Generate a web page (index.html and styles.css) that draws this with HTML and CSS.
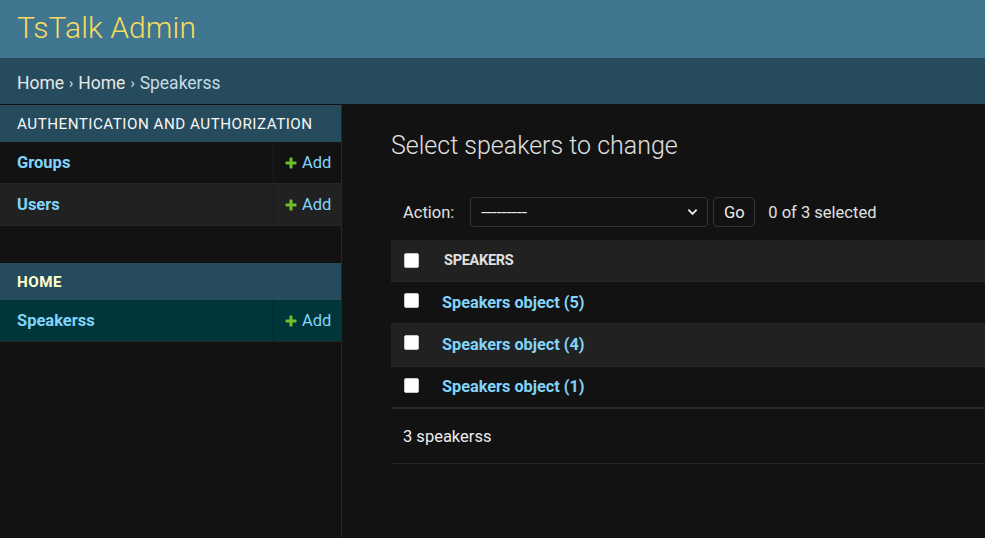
FILE: index.html
```html
<!DOCTYPE html>
<html lang="en">
<head>
<meta charset="utf-8">
<title>Select speakers to change | TsTalk Admin</title>
<link rel="stylesheet" href="styles.css">
</head>
<body>
<header class="header">
  <div class="branding">TsTalk Admin</div>
</header>
<nav class="breadcrumbs">
  <a href="#">Home</a><span class="sep">›</span><a href="#">Home</a><span class="sep">›</span><span class="current">Speakerss</span>
</nav>
<div class="main">
  <aside class="sidebar">
    <div class="module">
      <div class="caption">Authentication and Authorization</div>
      <div class="nav-row">
        <a class="model" href="#">Groups</a>
        <a class="add" href="#"><svg class="plus" viewBox="0 0 1792 1792"><path d="M1600 796v192q0 40-28 68t-68 28h-416v416q0 40-28 68t-68 28h-192q-40 0-68-28t-28-68v-416h-416q-40 0-68-28t-28-68v-192q0-40 28-68t68-28h416v-416q0-40 28-68t68-28h192q40 0 68 28t28 68v416h416q40 0 68 28t28 68z"/></svg>Add</a>
      </div>
      <div class="nav-row alt">
        <a class="model" href="#">Users</a>
        <a class="add" href="#"><svg class="plus" viewBox="0 0 1792 1792"><path d="M1600 796v192q0 40-28 68t-68 28h-416v416q0 40-28 68t-68 28h-192q-40 0-68-28t-28-68v-416h-416q-40 0-68-28t-28-68v-192q0-40 28-68t68-28h416v-416q0-40 28-68t68-28h192q40 0 68 28t28 68v416h416q40 0 68 28t28 68z"/></svg>Add</a>
      </div>
    </div>
    <div class="module">
      <div class="caption current-app">Home</div>
      <div class="nav-row selected">
        <a class="model" href="#">Speakerss</a>
        <a class="add" href="#"><svg class="plus" viewBox="0 0 1792 1792"><path d="M1600 796v192q0 40-28 68t-68 28h-416v416q0 40-28 68t-68 28h-192q-40 0-68-28t-28-68v-416h-416q-40 0-68-28t-28-68v-192q0-40 28-68t68-28h416v-416q0-40 28-68t68-28h192q40 0 68 28t28 68v416h416q40 0 68 28t28 68z"/></svg>Add</a>
      </div>
    </div>
  </aside>
  <section class="content">
    <h1 class="title">Select speakers to change</h1>
    <div class="changelist">
      <div class="actions">
        <span class="label">Action:</span>
        <div class="select">
          <span class="select-text">---------</span>
          <svg class="chevron" viewBox="0 0 12 8"><polyline points="1.5,1.5 6,6 10.5,1.5"/></svg>
        </div>
        <button class="go">Go</button>
        <span class="counter">0 of 3 selected</span>
      </div>
      <table class="results">
        <thead>
          <tr><th class="check-col"><span class="checkbox"></span></th><th class="name-col">Speakers</th></tr>
        </thead>
        <tbody>
          <tr><td class="check-col"><span class="checkbox"></span></td><td class="name-col"><a href="#">Speakers object (5)</a></td></tr>
          <tr class="alt"><td class="check-col"><span class="checkbox"></span></td><td class="name-col"><a href="#">Speakers object (4)</a></td></tr>
          <tr class="last"><td class="check-col"><span class="checkbox"></span></td><td class="name-col"><a href="#">Speakers object (1)</a></td></tr>
        </tbody>
      </table>
      <p class="paginator">3 speakerss</p>
    </div>
  </section>
</div>
</body>
</html>
```
FILE: styles.css
```css
html, body {
  margin: 0;
  padding: 0;
  background: #121212;
  color: #eeeeee;
  font-family: Roboto, "Liberation Sans", sans-serif;
  overflow: hidden;
  height: 538px;
}
a { text-decoration: none; }

.header {
  background: #417690;
  height: 58px;
  display: flex;
  align-items: center;
  padding: 0 17px;
}
.branding {
  color: #f5dd5d;
  font-size: 30px;
  font-weight: 300;
  letter-spacing: 0.1px;
  margin-top: -3px;
}

.breadcrumbs {
  background: #264b5d;
  height: 46px;
  display: flex;
  align-items: center;
  padding: 3px 17px 0;
  font-size: 17.5px;
  box-sizing: border-box;
}
.breadcrumbs a { color: #e8e8e8; }
.breadcrumbs .sep { color: #e0e0e0; font-size: 14px; margin: 0 5px; }
.breadcrumbs .current { color: #c4dce8; }

.main {
  display: flex;
  min-height: 434px;
}

.sidebar {
  width: 341px;
  flex: none;
  border-right: 1px solid #272727;
  padding-top: 1px;
}
.module { margin-bottom: 37px; }
.caption {
  background: #264b5d;
  height: 36px;
  display: flex;
  align-items: center;
  padding: 1px 17px 0;
  font-size: 15.2px;
  text-transform: uppercase;
  letter-spacing: 0.5px;
  color: #f7f7f7;
}
.caption.current-app {
  color: #ffffcc;
  font-weight: bold;
}
.nav-row {
  display: flex;
  height: 41px;
  border-bottom: 1px solid #272727;
  font-size: 16.5px;
}
.nav-row.alt { background: #212121; }
.nav-row.selected { background: #00363a; }
.nav-row .model {
  flex: 1;
  display: flex;
  align-items: center;
  padding-left: 17px;
  color: #81d4fa;
  font-weight: bold;
}
.nav-row .add {
  width: 57px;
  display: flex;
  align-items: center;
  padding-left: 10px;
  border-left: 1px solid #1c1c1c;
  color: #81d4fa;
  font-size: 16.5px;
}
.plus {
  width: 14px;
  height: 14px;
  fill: #70bf2b;
  margin-right: 4px;
}

.content {
  flex: 1;
  padding: 27px 0 0 49px;
  min-width: 0;
}
.title {
  margin: 0 0 23px;
  font-size: 25px;
  font-weight: 300;
  line-height: 30px;
  color: #e0e0e0;
}
.changelist { width: 700px; }

.actions {
  display: flex;
  align-items: center;
  height: 56px;
  padding: 0 12px;
  box-sizing: border-box;
  font-size: 16.5px;
  color: #e0e0e0;
}
.actions .label { margin-right: 16px; }
.select {
  width: 238px;
  height: 30px;
  box-sizing: border-box;
  border: 1px solid #353535;
  border-radius: 4px;
  background: #121212;
  display: flex;
  align-items: center;
  padding: 0 10px;
  justify-content: space-between;
}
.select-text {
  display: inline-block;
  font-size: 15px;
  letter-spacing: -0.4px;
  color: #eeeeee;
  transform: scaleX(1.35);
  transform-origin: left center;
}
.chevron {
  width: 11px;
  height: 8px;
  fill: none;
  stroke: #eeeeee;
  stroke-width: 2;
  margin-right: -1px;
}
.go {
  margin-left: 5px;
  height: 30px;
  width: 42px;
  border: 1px solid #353535;
  border-radius: 4px;
  background: #121212;
  color: #eeeeee;
  font-family: inherit;
  font-size: 16.5px;
  padding: 0;
}
.counter { margin-left: 13px; }

.results {
  width: 100%;
  border-collapse: collapse;
}
.results th, .results td { padding: 0; text-align: left; }
.results thead tr {
  background: #212121;
  height: 41px;
}
.results tbody tr {
  height: 42px;
  border-top: 1px solid #272727;
}
.results tbody tr.alt { background: #212121; height: 43px; }
.results tbody tr.last { border-bottom: 2px solid #2a2a2a; height: 42px; }
.check-col { width: 53px; padding-left: 13px !important; box-sizing: border-box; }
.results thead .check-col { vertical-align: middle; }
.results thead .name-col {
  font-size: 14.5px;
  font-weight: bold;
  text-transform: uppercase;
  color: #e0e0e0;
  letter-spacing: -0.3px;
}
.results tbody .name-col a {
  color: #81d4fa;
  font-weight: bold;
  font-size: 16.3px;
}
.results tbody .check-col { vertical-align: top; padding-top: 11px !important; }
.results tbody td.name-col { position: relative; left: -2px; }
.checkbox {
  display: block;
  width: 13px;
  height: 13px;
  background: #ffffff;
  border: 1px solid #c8c8c8;
  border-radius: 2px;
}

.paginator {
  margin: 0;
  height: 55px;
  box-sizing: border-box;
  border-bottom: 1px solid #272727;
  display: flex;
  align-items: center;
  padding-left: 12px;
  padding-top: 1px;
  font-size: 16.5px;
  color: #eeeeee;
}
```
